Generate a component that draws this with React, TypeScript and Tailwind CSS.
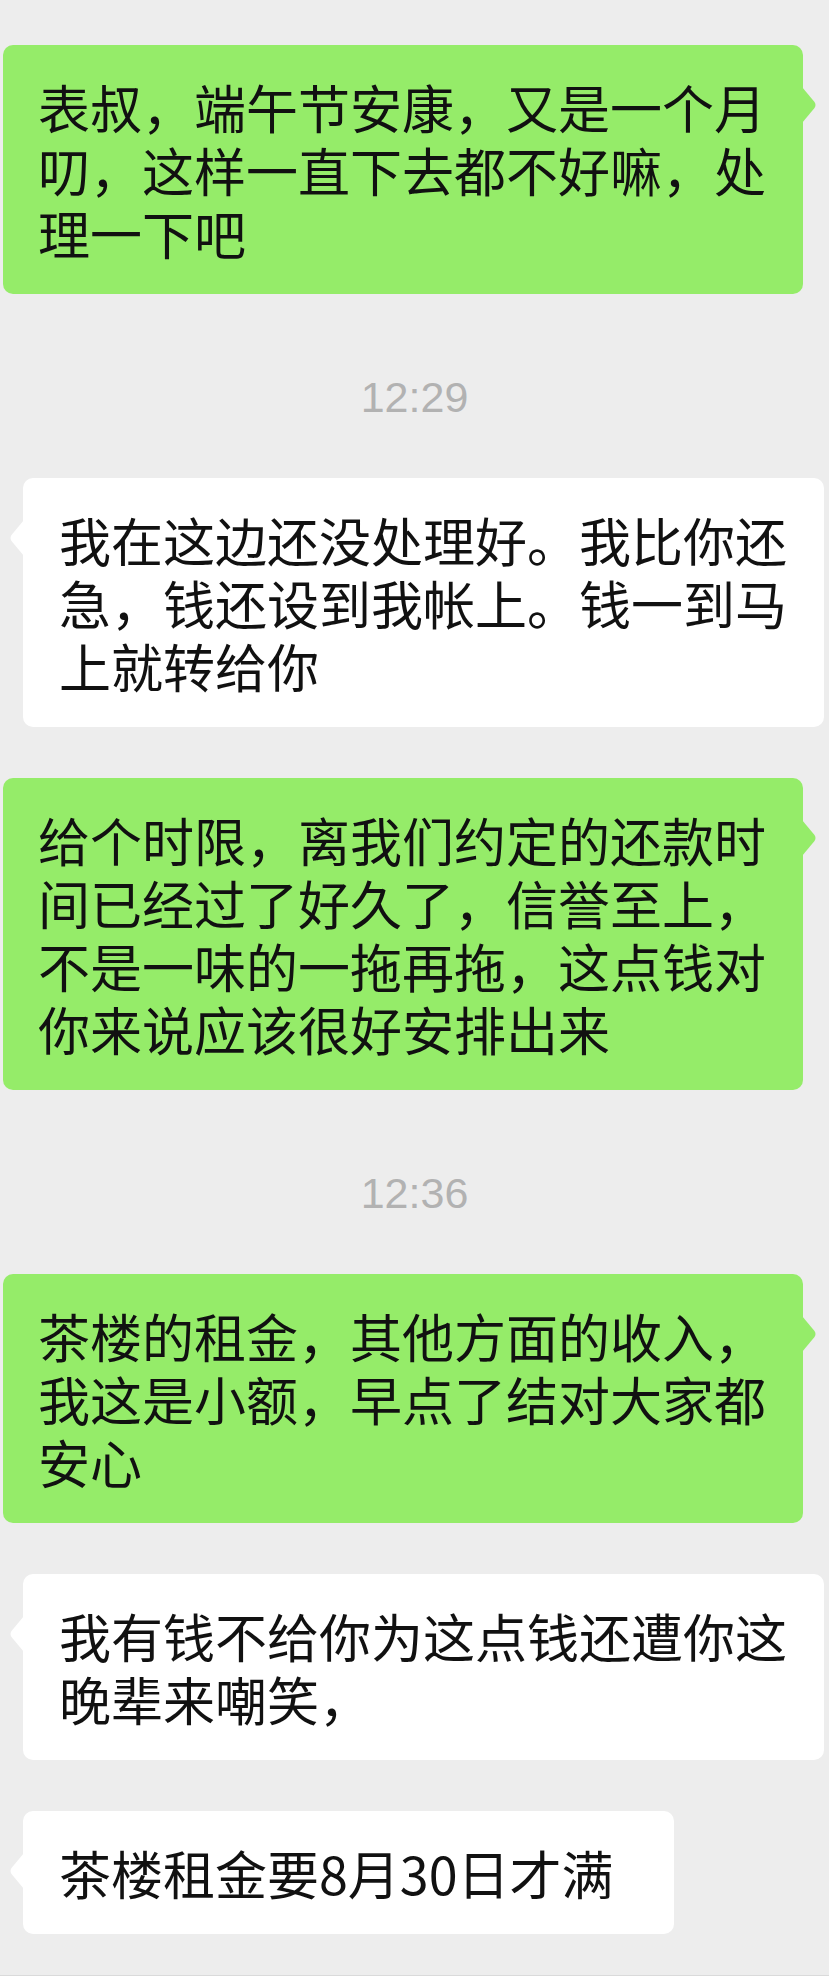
import React from "react";

type Msg =
  | { kind: "time"; text: string }
  | { kind: "me" | "them"; lines: string[]; fit?: boolean };

const messages: Msg[] = [
  {
    kind: "me",
    lines: ["表叔，端午节安康，又是一个月", "叨，这样一直下去都不好嘛，处", "理一下吧"],
  },
  { kind: "time", text: "12:29" },
  {
    kind: "them",
    lines: ["我在这边还没处理好。我比你还", "急，钱还设到我帐上。钱一到马", "上就转给你"],
  },
  {
    kind: "me",
    lines: [
      "给个时限，离我们约定的还款时",
      "间已经过了好久了，信誉至上，",
      "不是一味的一拖再拖，这点钱对",
      "你来说应该很好安排出来",
    ],
  },
  { kind: "time", text: "12:36" },
  {
    kind: "me",
    lines: ["茶楼的租金，其他方面的收入，", "我这是小额，早点了结对大家都", "安心"],
  },
  {
    kind: "them",
    lines: ["我有钱不给你为这点钱还遭你这", "晚辈来嘲笑，"],
  },
  { kind: "them", lines: ["茶楼租金要8月30日才满"], fit: true },
];

function Tail({ side, color }: { side: "left" | "right"; color: string }) {
  if (side === "right") {
    return (
      <svg
        width="16"
        height="36"
        viewBox="0 0 16 36"
        className="absolute top-[42px] right-[-15px]"
      >
        <path d="M0 0 L12.5 15 Q14.5 18 12.5 21 L0 36 Z" fill={color} />
      </svg>
    );
  }
  return (
    <svg
      width="16"
      height="36"
      viewBox="0 0 16 36"
      className="absolute top-[42px] left-[-15px]"
    >
      <path d="M16 0 L3.5 15 Q1.5 18 3.5 21 L16 36 Z" fill={color} />
    </svg>
  );
}

function Bubble({ msg }: { msg: Extract<Msg, { lines: string[] }> }) {
  const mine = msg.kind === "me";
  return (
    <div
      className={
        mine
          ? "relative ml-[3px] w-[800px] rounded-[10px] bg-[#95ec69] pl-[35px] pr-[28px] py-[30px]"
          : msg.fit
          ? "relative ml-[23px] w-fit rounded-[10px] bg-white pl-[36px] pr-[60px] py-[30px]"
          : "relative ml-[23px] w-[801px] rounded-[10px] bg-white pl-[36px] pr-[28px] py-[30px]"
      }
    >
      <Tail side={mine ? "right" : "left"} color={mine ? "#95ec69" : "#ffffff"} />
      <div className="text-[52px] leading-[63px] text-[#111111] whitespace-nowrap">
        {msg.lines.map((l, i) => (
          <div key={i}>{l}</div>
        ))}
      </div>
    </div>
  );
}

export default function App() {
  return (
    <div
      className="flex h-[1976px] w-[829px] flex-col overflow-hidden bg-[#ededed] pt-[45px]"
      style={{ fontFamily: '"Noto Sans CJK SC", "Noto Sans", sans-serif' }}
    >
      {messages.map((m, i) => {
        if (m.kind === "time") {
          return (
            <div
              key={i}
              className="mt-[73px] mb-[51px] text-center text-[43px] leading-[60px] text-[#b2b2b2] font-['Liberation_Sans',sans-serif]"
            >
              {m.text}
            </div>
          );
        }
        const prev = messages[i - 1];
        const gap = i > 0 && prev.kind !== "time" ? "mt-[51px]" : "";
        return (
          <div key={i} className={gap}>
            <Bubble msg={m} />
          </div>
        );
      })}
      <div className="mt-auto h-px bg-[#dadada]" />
    </div>
  );
}
